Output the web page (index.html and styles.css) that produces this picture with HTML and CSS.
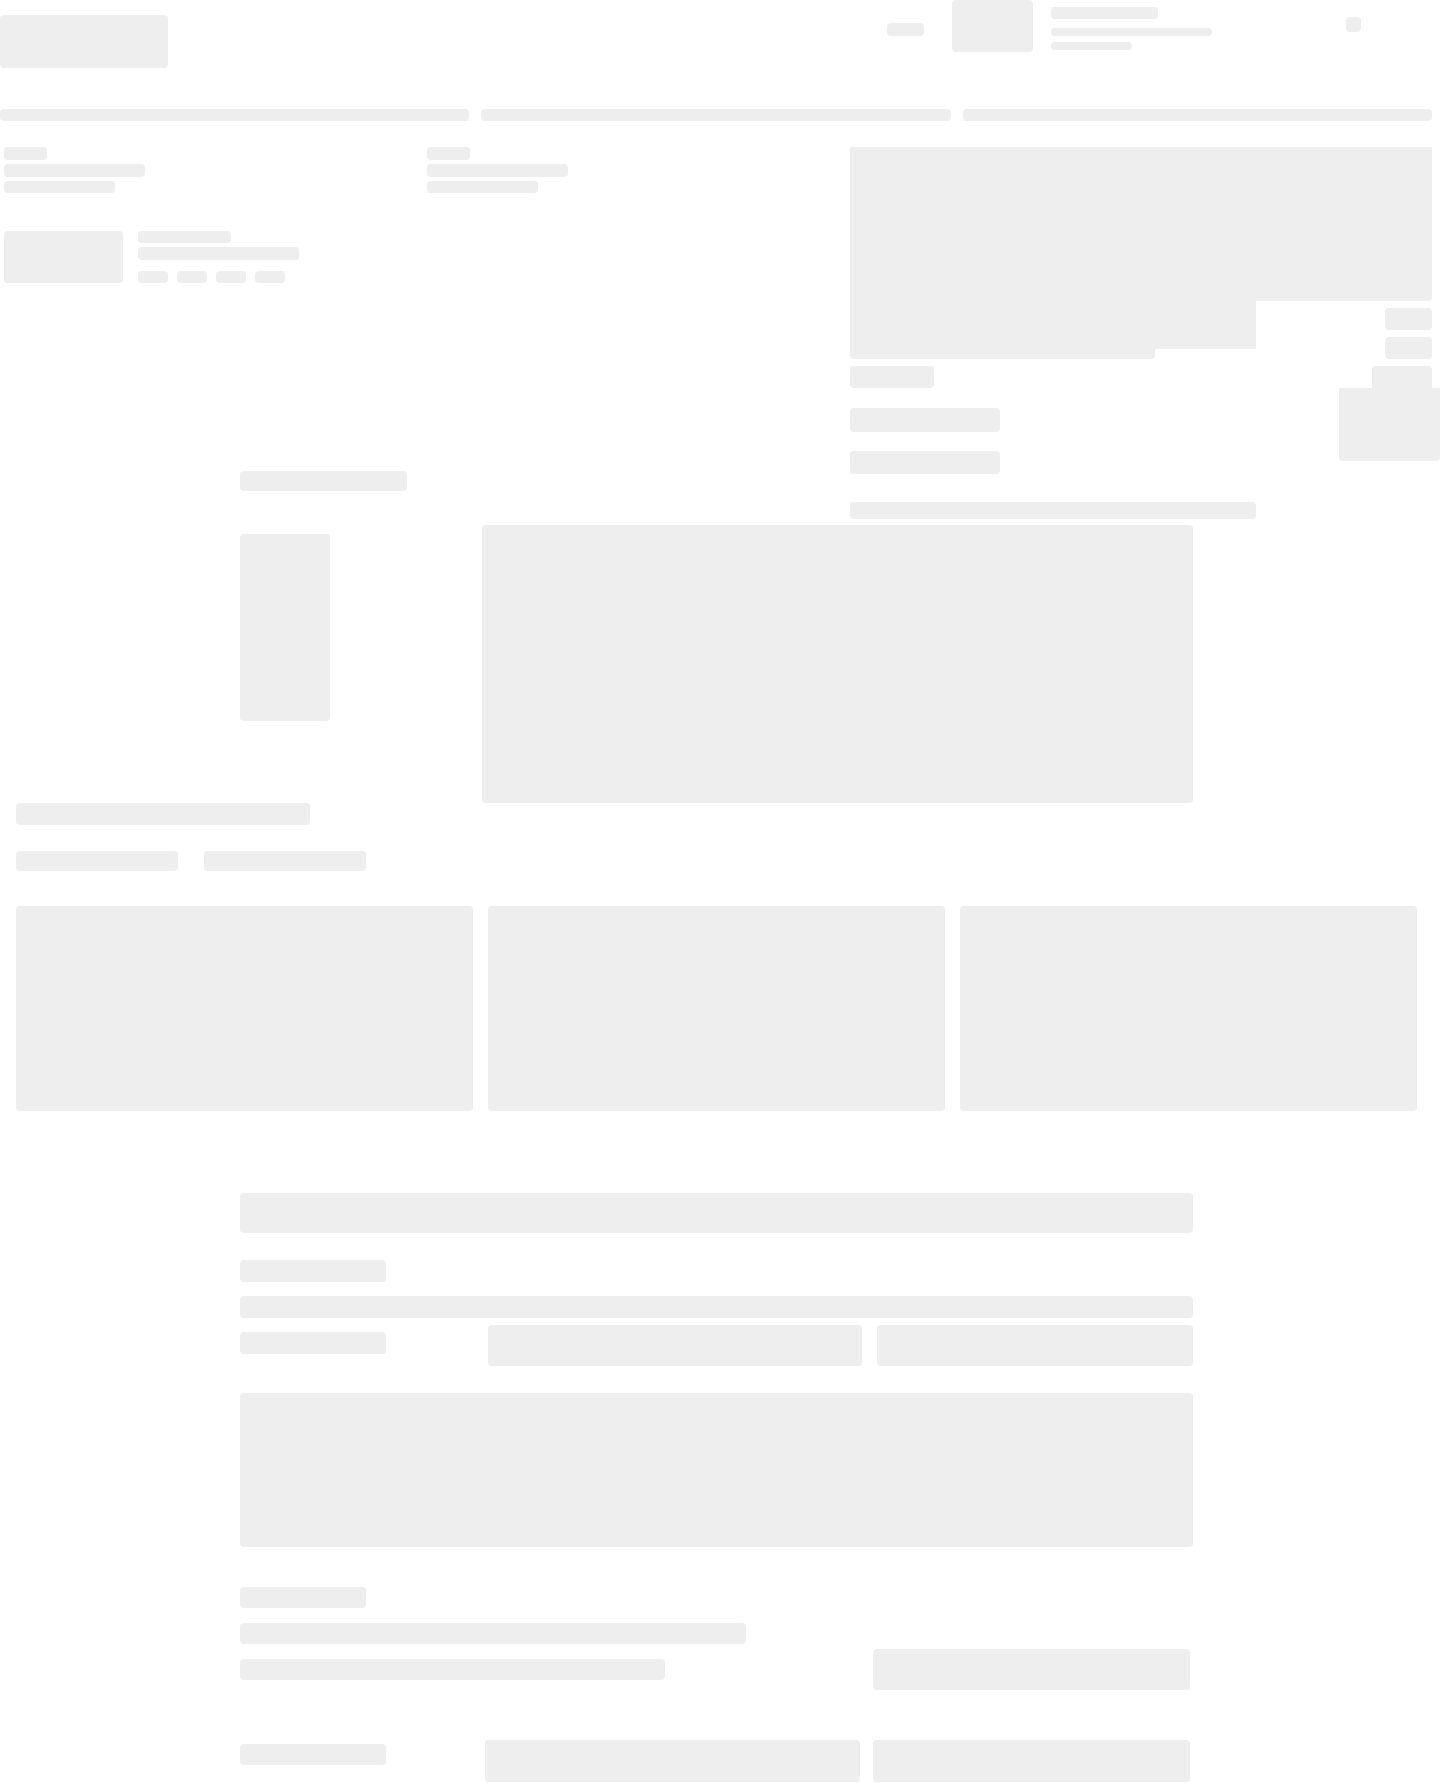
FILE: index.html
```html
<!DOCTYPE html>
<html lang="en">
<head>
<meta charset="utf-8">
<title>Loading</title>
<link rel="stylesheet" href="styles.css">
</head>
<body>
<div class="page">
  <header class="header">
    <div class="sk logo"></div>
    <div class="sk hdr-link"></div>
    <div class="sk hdr-avatar"></div>
    <div class="hdr-lines">
      <div class="sk hl1"></div>
      <div class="sk hl2"></div>
      <div class="sk hl3"></div>
    </div>
    <div class="sk hdr-icon"></div>
  </header>

  <div class="bars">
    <div class="sk bar"></div>
    <div class="sk bar"></div>
    <div class="sk bar"></div>
  </div>

  <section class="top">
    <div class="col col1">
      <div class="sk t1"></div>
      <div class="sk t2"></div>
      <div class="sk t3"></div>
      <div class="item">
        <div class="sk item-img"></div>
        <div class="item-info">
          <div class="sk i1"></div>
          <div class="sk i2"></div>
          <div class="chips">
            <div class="sk chip"></div>
            <div class="sk chip"></div>
            <div class="sk chip"></div>
            <div class="sk chip"></div>
          </div>
        </div>
      </div>
      <div class="sk side-title"></div>
    </div>
    <div class="col col2">
      <div class="sk t1"></div>
      <div class="sk t2"></div>
      <div class="sk t3"></div>
    </div>
    <div class="gallery">
      <div class="media">
        <div class="sk media-c"></div>
        <div class="sk media-a"></div>
        <div class="sk media-b"></div>
        <div class="sk thumb th1"></div>
        <div class="sk thumb th2"></div>
      </div>
      <div class="g-row">
        <div class="sk g-b1"></div>
        <div class="sk g-t3"></div>
        <div class="sk g-float"></div>
      </div>
      <div class="sk g-b2"></div>
      <div class="sk g-b3"></div>
      <div class="sk g-long"></div>
    </div>
  </section>

  <section class="mid">
    <div class="sk mid-tall"></div>
    <div class="sk mid-panel"></div>
  </section>

  <section class="cards-sec">
    <div class="sk cs-title"></div>
    <div class="tabs">
      <div class="sk tab"></div>
      <div class="sk tab"></div>
    </div>
    <div class="cards">
      <div class="sk card"></div>
      <div class="sk card"></div>
      <div class="sk card"></div>
    </div>
  </section>

  <section class="form">
    <div class="sk f-head"></div>
    <div class="sk f-label f-l1"></div>
    <div class="sk f-full"></div>
    <div class="f-row r1">
      <div class="sk f-label"></div>
      <div class="sk f-in1"></div>
      <div class="sk f-in2"></div>
    </div>
    <div class="sk f-area"></div>
    <div class="sk f-small"></div>
    <div class="f-row r2">
      <div class="f-left">
        <div class="sk f-w1"></div>
        <div class="sk f-w2"></div>
      </div>
      <div class="sk f-box"></div>
    </div>
    <div class="f-row r3">
      <div class="sk f-label f-lb"></div>
      <div class="sk f-in3"></div>
      <div class="sk f-in4"></div>
    </div>
  </section>
</div>
</body>
</html>
```

FILE: styles.css
```css
* { box-sizing: border-box; }
html, body { margin: 0; padding: 0; background: #ffffff; }
body { font-family: "Liberation Sans", Arial, sans-serif; width: 1440px; height: 1783px; overflow: hidden; }

.sk { background: #eeeeee; border-radius: 4px; }

/* header */
.header { display: flex; align-items: flex-start; height: 68px; }
.logo { width: 168px; height: 53px; margin-top: 15px; }
.hdr-link { width: 37px; height: 13px; margin-left: 719px; margin-top: 23px; }
.hdr-avatar { width: 81px; height: 52px; margin-left: 28px; }
.hdr-lines { margin-left: 18px; padding-top: 7px; display: flex; flex-direction: column; }
.hl1 { width: 107px; height: 12px; }
.hl2 { width: 161px; height: 8px; margin-top: 9px; }
.hl3 { width: 81px; height: 8px; margin-top: 6px; }
.hdr-icon { width: 15px; height: 15px; margin-left: 134px; margin-top: 17px; }

/* bars */
.bars { display: grid; grid-template-columns: repeat(3, 1fr); gap: 12px; width: 1432px; margin-top: 41px; }
.bar { height: 12px; }

/* top section */
.top { display: flex; align-items: flex-start; margin-top: 26px; padding-left: 4px; }
.col { width: 423px; display: flex; flex-direction: column; align-items: flex-start; }
.t1 { width: 43px; height: 13px; }
.t2 { width: 141px; height: 13px; margin-top: 4px; }
.t3 { width: 111px; height: 12px; margin-top: 4px; }
.item { display: flex; align-items: flex-start; margin-top: 38px; }
.item-img { width: 119px; height: 52px; }
.item-info { margin-left: 15px; display: flex; flex-direction: column; }
.i1 { width: 93px; height: 12px; }
.i2 { width: 161px; height: 13px; margin-top: 4px; }
.chips { display: flex; gap: 9px; margin-top: 11px; }
.chip { width: 30px; height: 12px; }
.side-title { width: 167px; height: 20px; margin-left: 236px; margin-top: 188px; }

.gallery { width: 582px; display: flex; flex-direction: column; align-items: flex-start; }
.media { position: relative; width: 582px; height: 212px; }
.media-c { width: 305px; height: 212px; border-radius: 0 0 4px 4px; }
.media-a { position: absolute; left: 0; top: 0; width: 582px; height: 154px; border-radius: 0 0 3px 0; }
.media-b { position: absolute; left: 0; top: 0; width: 406px; height: 202px; border-radius: 0; }
.thumb { position: absolute; left: 535px; width: 47px; height: 22px; }
.th1 { top: 161px; }
.th2 { top: 190px; }
.g-row { position: relative; display: flex; justify-content: space-between; width: 582px; margin-top: 7px; }
.g-b1 { width: 84px; height: 22px; }
.g-t3 { width: 60px; height: 22px; border-radius: 4px 4px 0 0; }
.g-float { position: absolute; left: 489px; top: 22px; width: 101px; height: 73px; border-radius: 0 0 4px 4px; }
.g-b2 { width: 150px; height: 24px; margin-top: 20px; }
.g-b3 { width: 150px; height: 23px; margin-top: 19px; }
.g-long { width: 406px; height: 17px; margin-top: 28px; }

/* middle */
.mid { display: flex; align-items: flex-start; margin-top: 6px; padding-left: 240px; }
.mid-tall { width: 90px; height: 187px; margin-top: 9px; }
.mid-panel { width: 711px; height: 278px; margin-left: 152px; }

/* cards */
.cards-sec { padding-left: 16px; }
.cs-title { width: 294px; height: 22px; }
.tabs { display: flex; gap: 26px; margin-top: 26px; }
.tab { width: 162px; height: 20px; }
.cards { display: grid; grid-template-columns: repeat(3, 1fr); gap: 15px; width: 1401px; margin-top: 35px; }
.card { height: 205px; }

/* form */
.form { margin-left: 240px; width: 953px; display: flex; flex-direction: column; align-items: flex-start; }
.f-head { width: 953px; height: 40px; margin-top: 82px; }
.f-label { width: 146px; height: 22px; }
.f-l1 { margin-top: 27px; }
.f-full { width: 953px; height: 22px; margin-top: 14px; }
.f-row { display: flex; align-items: flex-start; }
.r1 { margin-top: 7px; }
.r1 .f-label { margin-top: 7px; }
.f-in1 { width: 374px; height: 41px; margin-left: 102px; }
.f-in2 { width: 316px; height: 41px; margin-left: 15px; }
.f-area { width: 953px; height: 154px; margin-top: 27px; }
.f-small { width: 126px; height: 21px; margin-top: 40px; }
.r2 { margin-top: 15px; }
.f-left { width: 633px; display: flex; flex-direction: column; }
.f-w1 { width: 506px; height: 21px; }
.f-w2 { width: 425px; height: 21px; margin-top: 15px; }
.f-box { width: 317px; height: 41px; margin-top: 26px; }
.r3 { margin-top: 50px; }
.f-lb { height: 21px; margin-top: 4px; }
.f-in3 { width: 375px; height: 42px; margin-left: 99px; }
.f-in4 { width: 317px; height: 42px; margin-left: 13px; }
```
